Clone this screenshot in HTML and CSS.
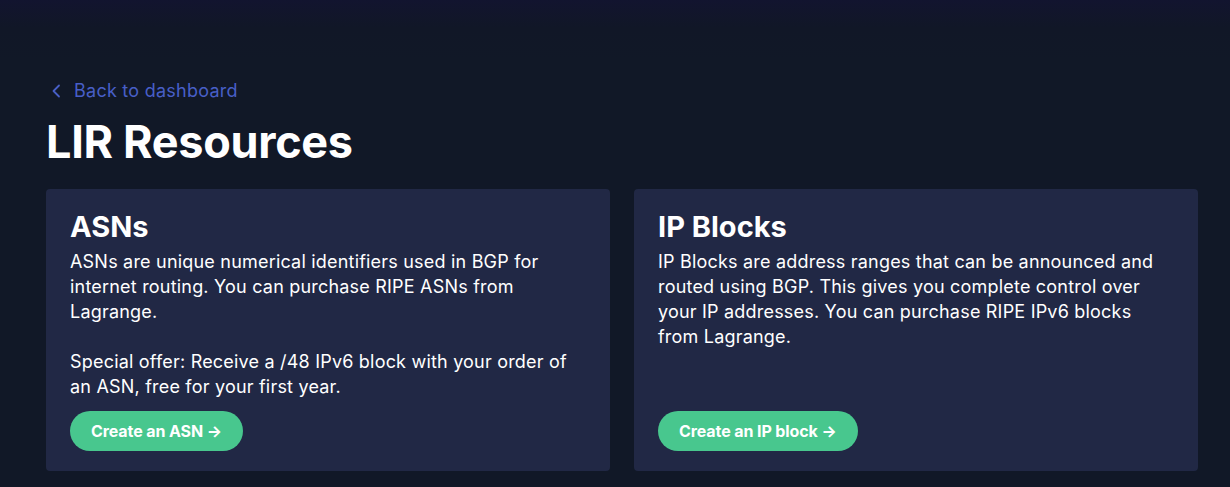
FILE: index.html
```html
<!DOCTYPE html>
<html lang="en">
<head>
<meta charset="utf-8">
<title>LIR Resources</title>
<link rel="stylesheet" href="styles.css">
</head>
<body>
<main class="page">
  <a class="back" href="#">
    <svg class="chev" viewBox="0 0 10 16" width="10" height="16" aria-hidden="true"><path d="M8 2.5 L2.5 8 L8 13.5" fill="none" stroke="currentColor" stroke-width="1.8" stroke-linecap="round" stroke-linejoin="round"/></svg>
    <span>Back to dashboard</span>
  </a>
  <h1 class="title">LIR Resources</h1>
  <section class="cards">
    <article class="card">
      <h2 class="card-title">ASNs</h2>
      <p class="card-text">ASNs are unique numerical identifiers used in BGP for internet routing. You can purchase RIPE ASNs from Lagrange.</p>
      <p class="card-text card-offer">Special offer: Receive a /48 IPv6 block with your order of an ASN, free for your first year.</p>
      <a class="btn" href="#">Create an ASN →</a>
    </article>
    <article class="card">
      <h2 class="card-title">IP Blocks</h2>
      <p class="card-text">IP Blocks are address ranges that can be announced and routed using BGP. This gives you complete control over your IP addresses. You can purchase RIPE IPv6 blocks from Lagrange.</p>
      <a class="btn" href="#">Create an IP block →</a>
    </article>
  </section>
</main>
</body>
</html>
```

FILE: styles.css
```css
html, body {
  margin: 0;
  padding: 0;
}
body {
  min-height: 487px;
  background: linear-gradient(180deg, #12142f 0px, #111727 28px, #111827 60px, #111827 100%);
  font-family: Inter, "Noto Sans", "Liberation Sans", sans-serif;
  color: #ffffff;
}
.page {
  padding: 79px 32px 16px 46px;
}
.back {
  display: inline-flex;
  align-items: center;
  gap: 13px;
  padding-left: 5px;
  color: #485fc7;
  text-decoration: none;
  font-size: 18px;
  line-height: 24px;
  letter-spacing: 0.25px;
}
.chev {
  display: block;
}
.title {
  margin: 14px 0 22px;
  font-size: 45px;
  line-height: 50px;
  font-weight: 700;
  letter-spacing: -0.3px;
}
.cards {
  display: grid;
  grid-template-columns: 1fr 1fr;
  gap: 24px;
}
.card {
  display: flex;
  flex-direction: column;
  align-items: flex-start;
  background: #212845;
  border-radius: 4px;
  padding: 22px 24px 20px;
}
.card-title {
  margin: 0 0 6px;
  font-size: 29px;
  line-height: 32px;
  font-weight: 700;
}
.card-text {
  margin: 0 0 12px;
  font-size: 18px;
  line-height: 25px;
  letter-spacing: 0.2px;
  max-width: 510px;
}
.card-offer {
  margin-top: 13px;
}
.btn {
  margin-top: auto;
  display: inline-flex;
  align-items: center;
  height: 40px;
  box-sizing: border-box;
  padding: 0 21px;
  border-radius: 20px;
  background: #48c78e;
  color: #ffffff;
  text-decoration: none;
  font-size: 16px;
  font-weight: 700;
  letter-spacing: -0.1px;
}
```
